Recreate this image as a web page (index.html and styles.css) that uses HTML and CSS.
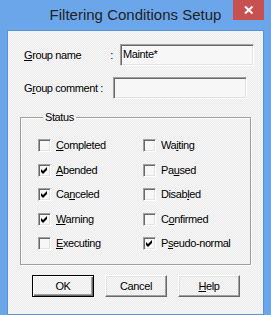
FILE: index.html
```html
<!DOCTYPE html>
<html>
<head>
<meta charset="utf-8">
<link rel="stylesheet" href="styles.css">
</head>
<body>
<div class="window">
  <div class="titlebar">
    <span></span>
    <div class="title">Filtering Conditions Setup</div>
    <div class="close">
      <svg width="31" height="20" viewBox="0 0 31 20"><path d="M12 6.5 L19.5 13.5 M19.5 6.5 L12 13.5" stroke="#fff" stroke-width="2" fill="none"/></svg>
    </div>
  </div>
  <div class="client">
    <div class="field-row">
      <div class="lbl lbl-split"><span><u>G</u>roup name</span><span>:</span></div>
      <div class="input">Mainte*</div>
    </div>
    <div class="field-row">
      <div class="lbl">G<u>r</u>oup comment :</div>
      <div class="input"></div>
    </div>
    <fieldset class="group">
      <legend class="legend">Status</legend>
      <div class="checks">
        <div class="check"><span class="box"></span><span><u>C</u>ompleted</span></div>
        <div class="check"><span class="box"></span><span>Wa<u>i</u>ting</span></div>
        <div class="check"><span class="box"><svg width="9" height="9" viewBox="0 0 9 9"><polygon points="1,3 3,5 7,1 7,4 3,8 1,6" fill="#000"/></svg></span><span><u>A</u>bended</span></div>
        <div class="check"><span class="box"></span><span>Pa<u>u</u>sed</span></div>
        <div class="check"><span class="box"><svg width="9" height="9" viewBox="0 0 9 9"><polygon points="1,3 3,5 7,1 7,4 3,8 1,6" fill="#000"/></svg></span><span>Ca<u>n</u>celed</span></div>
        <div class="check"><span class="box"></span><span>Disab<u>l</u>ed</span></div>
        <div class="check"><span class="box"><svg width="9" height="9" viewBox="0 0 9 9"><polygon points="1,3 3,5 7,1 7,4 3,8 1,6" fill="#000"/></svg></span><span><u>W</u>arning</span></div>
        <div class="check"><span class="box"></span><span>C<u>o</u>nfirmed</span></div>
        <div class="check"><span class="box"></span><span><u>E</u>xecuting</span></div>
        <div class="check"><span class="box"><svg width="9" height="9" viewBox="0 0 9 9"><polygon points="1,3 3,5 7,1 7,4 3,8 1,6" fill="#000"/></svg></span><span>P<u>s</u>eudo-normal</span></div>
      </div>
    </fieldset>
    <div class="buttons">
      <div class="btn btn-default">OK</div>
      <div class="btn">Cancel</div>
      <div class="btn btn-help"><span><u>H</u>elp</span></div>
    </div>
  </div>
</div>
</body>
</html>
```
FILE: styles.css
```css
html, body {
  margin: 0;
  padding: 0;
}
body {
  width: 271px;
  height: 315px;
  overflow: hidden;
  background: #6ca6ea;
}
.window {
  width: 271px;
  height: 315px;
  display: flex;
  flex-direction: column;
}
.titlebar {
  height: 30px;
  display: grid;
  grid-template-columns: 1fr auto 1fr;
}
.title {
  font-family: "Liberation Sans", Arial, sans-serif;
  font-size: 15px;
  line-height: 30px;
  color: #222;
  white-space: nowrap;
}
.close {
  justify-self: end;
  align-self: start;
  margin-right: 7px;
  width: 31px;
  height: 20px;
  background: #c75050;
}
.close svg {
  display: block;
}
.client,
.legend,
.btn {
  background: repeating-conic-gradient(#ebebeb 0 25%, #f8f8f8 0 50%) 0 0 / 2px 2px fixed;
}
.client {
  margin-left: 7px;
  width: 255px;
  height: 275px;
  border: 1px solid #5a92d8;
  font-family: "Liberation Sans", Arial, sans-serif;
  font-size: 11px;
  letter-spacing: -0.4px;
  color: #000;
  padding-top: 13px;
  box-sizing: content-box;
}
.client > * {
  box-sizing: border-box;
}
.field-row {
  display: flex;
  align-items: center;
  padding-left: 16px;
  height: 22px;
  margin-bottom: 11px;
}
.lbl {
  width: 89px;
  white-space: nowrap;
}
.lbl-split {
  display: flex;
  justify-content: space-between;
  padding-right: 7px;
}
.input {
  width: 134px;
  height: 22px;
  box-sizing: border-box;
  border: 1px solid;
  border-color: #a0a0a0 #ffffff #ffffff #a0a0a0;
  box-shadow: inset 1px 1px 0 #696969, inset -1px -1px 0 #e3e3e3;
  background: #f7f7f7;
  padding: 0 0 0 2px;
  line-height: 19px;
}
u {
  text-decoration: underline;
  text-underline-offset: 1px;
}
.group {
  margin: 0 0 0 12px;
  width: 231px;
  border: 1px solid #a0a0a0;
  box-shadow: 1px 1px 0 #fff, inset 1px 1px 0 #fff;
  padding: 15px 0 14px 17px;
  min-width: 0;
}
.legend {
  margin-left: 5px;
  padding: 0 2px;
  line-height: 14px;
}
.checks {
  display: grid;
  grid-template-columns: 105px 1fr;
  grid-auto-rows: 13px;
  row-gap: 11.5px;
}
.check {
  display: flex;
  align-items: center;
  gap: 5px;
  white-space: nowrap;
  line-height: 13px;
}
.box {
  width: 13px;
  height: 13px;
  box-sizing: border-box;
  border: 1px solid;
  border-color: #a0a0a0 #ffffff #ffffff #a0a0a0;
  box-shadow: inset 1px 1px 0 #696969, inset -1px -1px 0 #e3e3e3;
  background: #f7f7f7;
  padding: 1px;
  flex: none;
  display: flex;
}
.box svg {
  display: block;
}
.buttons {
  display: flex;
  gap: 11px;
  padding-left: 24px;
  margin-top: 10px;
}
.btn {
  width: 62px;
  height: 22px;
  box-sizing: border-box;
  border: 1px solid;
  border-color: #ffffff #696969 #696969 #ffffff;
  box-shadow: inset -1px -1px 0 #a0a0a0, inset 1px 1px 0 #e3e3e3;
  display: flex;
  align-items: center;
  justify-content: center;
  line-height: 13px;
}
.btn-default {
  border-color: #000;
  box-shadow: inset 1px 1px 0 #fff, inset -1px -1px 0 #696969, inset -2px -2px 0 #a0a0a0;
}
```
